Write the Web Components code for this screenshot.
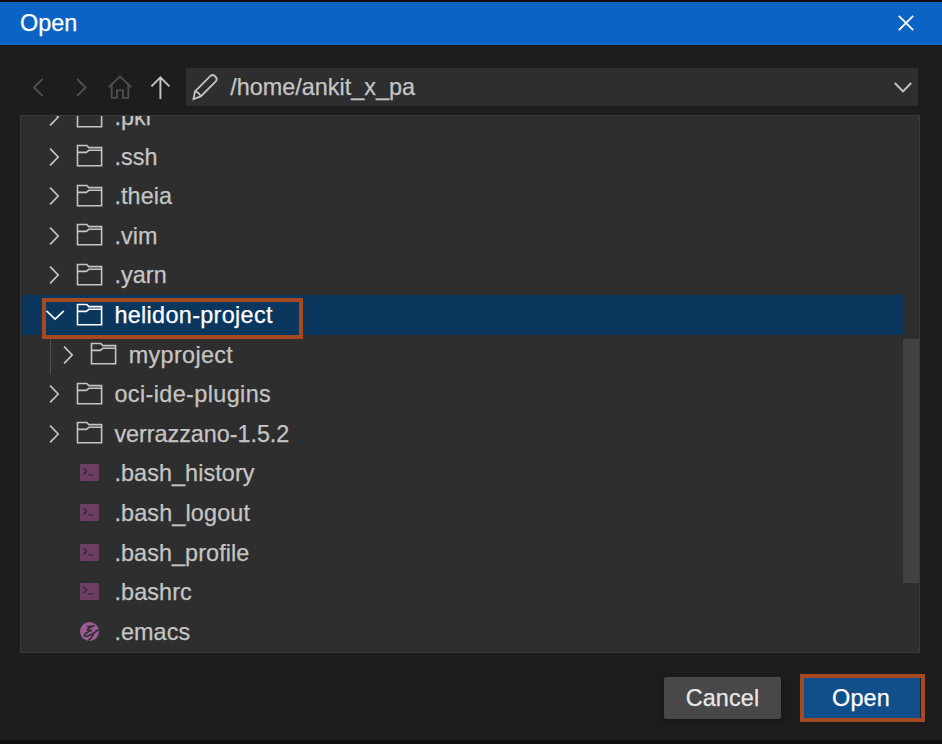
<!DOCTYPE html>
<html lang="en">
<head>
<meta charset="utf-8">
<title>Open</title>
<style>
html, body { margin: 0; height: 100%; overflow: hidden; background: #111; }
body { font: 23.4px/1.2 "Liberation Sans", Arial, sans-serif; color: #c5c5c5; -webkit-text-stroke: .25px currentColor; }
</style>
</head>
<body>
<file-dialog></file-dialog>
<script>
const line = (d, w = 1.7) => `<path d="${d}" fill="none" stroke="currentColor" stroke-width="${w}"/>`;
const ICONS = {
  close: [16, 16, line('M.8 .8L15.2 15.2M15.2 .8L.8 15.2', 1.8)],
  back: [11, 19, line('M9.6 1L1 9.5L9.6 18', 1.8)],
  forward: [11, 19, line('M1 1L9.6 9.5L1 18', 1.8)],
  home: [24, 24, line('M.8 12.2L12 1.6L23.2 12.2M3.7 10V22.8H8.9V15.3H14.9V22.8H20.3V10', 1.8)],
  up: [20, 23, line('M.4 10.4L9.4 1.3L18.4 10.4M9.4 1.5V22.9', 1.9)],
  pencil: [26, 26, line('M3 17.3L18.7 1.7Q20.7 .2 22.8 2Q25.8 4.5 24.2 6.8L8.8 22.4L1.5 25.1ZM3 17.3Q6.8 18 8.8 22.4', 1.8)],
  down: [18, 11, line('M.8 1L9 9.4L17.2 1', 2)],
  right: [10, 18, line('M.1 .6L8.2 9L.1 17.4', 1.7)],
  expanded: [19, 10, line('M.5 .8L9.1 9L17.8 .8', 1.7)],
  folder: [26, 22, line('M.5 .5H9.8L11.8 2.6H24.6V20.7H.5ZM.5 7.4H9.4L11.8 5.3H24.6', 1.6)],
  shell: [19, 17, `<rect width="19" height="17" rx="1.2" fill="#6d3d63"/><path d="M3.3 4L6.7 7.2L3.3 10.4M8.2 10.9H13.2" fill="none" stroke="#332b32" stroke-width="1.4"/>`],
  emacs: [19, 19, `<circle cx="9.5" cy="9.5" r="9.5" fill="#9b5c91"/><path d="M7 4.3Q10.5 5.2 14.6 3.6Q9 5.6 7.3 7.6Q8.8 8.8 12 8.3Q5.6 10.6 4.3 13Q4.2 14.8 7.8 14.1Q13.2 12.5 18.6 7.4M8.4 18.6Q11.5 16.2 13.7 11.6" fill="none" stroke="#302d30" stroke-width="1.6"/>`]
};

class UiIcon extends HTMLElement {
  connectedCallback() {
    const [w, h, art] = ICONS[this.getAttribute('name')];
    this.attachShadow({mode: 'open'}).innerHTML = `<style>
      :host { display: block; flex: none; width: ${w}px; height: ${h}px; }
      svg { display: block; overflow: visible; }
    </style><svg width="${w}" height="${h}" viewBox="0 0 ${w} ${h}">${art}</svg>`;
  }
}
customElements.define('ui-icon', UiIcon);

class TreeRow extends HTMLElement {
  connectedCallback() {
    const type = this.getAttribute('type') || 'folder';
    const open = this.hasAttribute('open');
    const chevron = type === 'folder' ? `<ui-icon name="${open ? 'expanded' : 'right'}"></ui-icon>` : '';
    this.attachShadow({mode: 'open'}).innerHTML = `<style>
      :host { display: flex; position: relative; box-sizing: border-box; flex: none; width: 882px; height: 39.6px; align-items: center; padding-left: 25px; white-space: nowrap; }
      :host([nested]) { padding-left: 39.4px; }
      :host([open]) { background: #0b375f; color: #fff; }
      .twist { width: 31px; flex: none; display: flex; }
      .twist ui-icon { margin-left: ${open ? 0 : 4}px; }
      .kind { width: 37.4px; flex: none; }
      .kind ui-icon { margin-left: ${type === 'folder' ? 0 : 3}px; position: relative; top: -.5px; }
      .label { letter-spacing: var(--track, .08px); }
      .guide { position: absolute; left: 29px; top: 0; width: 1px; height: 100%; background: #505050; }
      .mark { position: absolute; z-index: 1; left: 21px; top: 3px; box-sizing: border-box; width: 261px; height: 41px; border: 4px solid #a54a20; }
    </style>
    ${this.hasAttribute('nested') ? '<div class="guide"></div>' : ''}
    <div class="twist">${chevron}</div><div class="kind"><ui-icon name="${type}"></ui-icon></div>
    <div class="label"><slot></slot></div>${open ? '<div class="mark"></div>' : ''}`;
  }
}
customElements.define('tree-row', TreeRow);

class FileTree extends HTMLElement {
  constructor() {
    super();
    this.attachShadow({mode: 'open'}).innerHTML = `<style>
      :host { display: flex; box-sizing: border-box; width: 900px; height: 538px; border: 1px solid #3a3a3a; background: #2e2e2e; overflow: hidden; }
      .rows { display: flex; flex-direction: column; margin-top: -18.7px; width: 882px; }
      .track { width: 16px; padding-top: 223px; }
      .thumb { height: 244px; background: #424242; }
    </style><div class="rows"><slot></slot></div><div class="track"><div class="thumb"></div></div>`;
  }
}
customElements.define('file-tree', FileTree);

class PathBar extends HTMLElement {
  constructor() {
    super();
    this.attachShadow({mode: 'open'}).innerHTML = `<style>
      :host { display: grid; grid-template-columns: 43px 42px 43px 25px 732px; height: 38px; align-items: center; padding-left: 33px; }
      .off { color: #505050; }
      .home, .up { margin-left: -10px; }
      .box { display: flex; align-items: center; height: 38px; box-sizing: border-box; padding: 0 6px; background: #2e2e2e; }
      .path { margin-left: 12.3px; flex: 1; }
    </style>
    <ui-icon class="off" name="back"></ui-icon><ui-icon class="off" name="forward"></ui-icon>
    <ui-icon class="off home" name="home"></ui-icon><ui-icon class="up" name="up"></ui-icon>
    <div class="box"><ui-icon name="pencil"></ui-icon><div class="path"><slot></slot></div><ui-icon name="down"></ui-icon></div>`;
  }
}
customElements.define('path-bar', PathBar);

class DialogButton extends HTMLElement {
  constructor() {
    super();
    this.attachShadow({mode: 'open'}).innerHTML = `<style>
      :host { display: flex; box-sizing: border-box; width: 117px; height: 42px; margin-top: 3px; align-items: center; justify-content: center; border-radius: 2px; background: #484848; color: #e7e7e7; box-shadow: 0 2px 8px #0005; letter-spacing: .15px; }
      :host([primary]) { width: 125px; height: 48px; margin-top: 0; padding-right: 3px; border: 4px solid #a54a20; border-radius: 0; background: linear-gradient(90deg, #114f8b 116px, #1d1d1d 116px); background-clip: padding-box; color: #fff; box-shadow: none; }
      span { display: block; }
    </style><span><slot></slot></span>`;
  }
}
customElements.define('dialog-button', DialogButton);

class FileDialog extends HTMLElement {
  constructor() {
    super();
    this.attachShadow({mode: 'open'}).innerHTML = `<style>
      :host { display: flex; flex-direction: column; box-sizing: border-box; width: 942px; height: 744px; padding: 2px 0 4px; background: #101010; }
      header { display: flex; align-items: center; justify-content: space-between; box-sizing: border-box; height: 43px; flex: none; padding: 0 28px 1px 20px; background: #0b63c3; color: #fff; }
      main { flex: 1; background: #1d1d1d; padding-top: 23px; }
      file-tree { margin: 9px 0 0 20px; }
      footer { display: flex; justify-content: flex-end; gap: 19px; padding: 21px 17px 0 0; }
    </style>
    <header><span>Open</span><ui-icon name="close"></ui-icon></header>
    <main>
      <path-bar>/home/ankit_x_pa</path-bar>
      <file-tree>
        <tree-row>.pki</tree-row>
        <tree-row>.ssh</tree-row>
        <tree-row>.theia</tree-row>
        <tree-row>.vim</tree-row>
        <tree-row>.yarn</tree-row>
        <tree-row open style="--track:.33px">helidon-project</tree-row>
        <tree-row nested style="--track:.33px">myproject</tree-row>
        <tree-row style="--track:.4px">oci-ide-plugins</tree-row>
        <tree-row style="--track:-.04px">verrazzano-1.5.2</tree-row>
        <tree-row type="shell">.bash_history</tree-row>
        <tree-row type="shell" style="--track:.15px">.bash_logout</tree-row>
        <tree-row type="shell">.bash_profile</tree-row>
        <tree-row type="shell" style="--track:.12px">.bashrc</tree-row>
        <tree-row type="emacs">.emacs</tree-row>
      </file-tree>
      <footer><dialog-button>Cancel</dialog-button><dialog-button primary>Open</dialog-button></footer>
    </main>`;
  }
}
customElements.define('file-dialog', FileDialog);
</script>
</body>
</html>
